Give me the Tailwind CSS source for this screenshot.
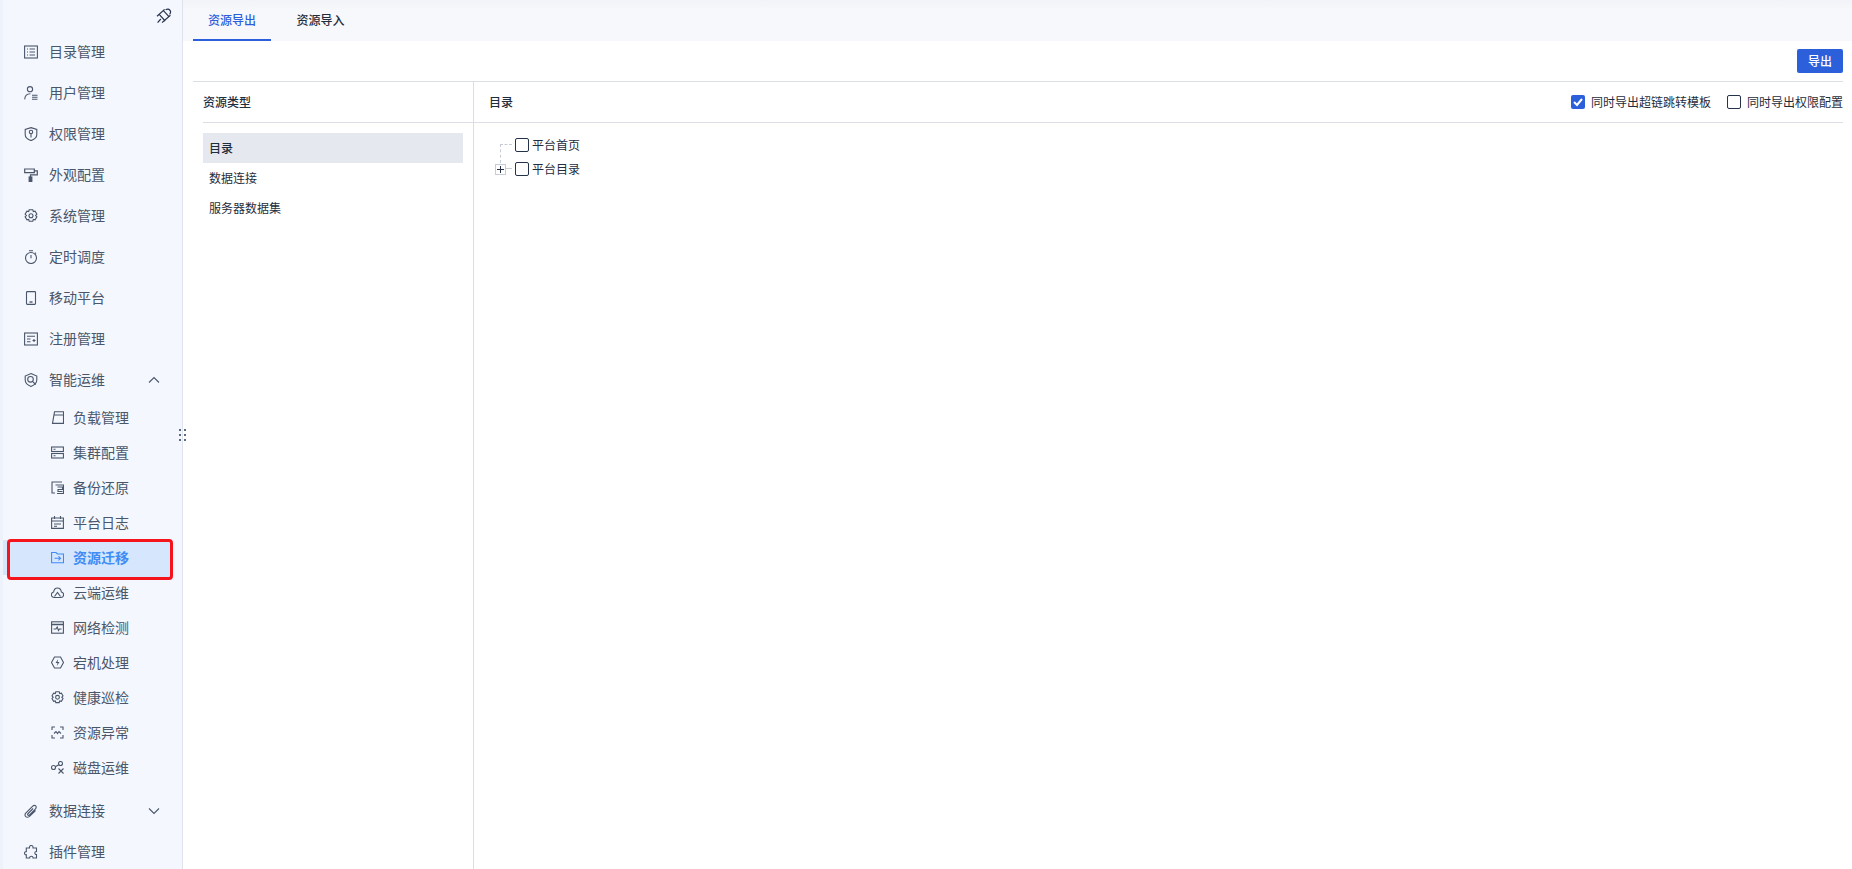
<!DOCTYPE html>
<html lang="zh">
<head>
<meta charset="utf-8">
<script src="https://cdn.jsdelivr.net/npm/@tailwindcss/browser@4"></script>
</head>
<body class="overflow-hidden bg-white font-['Noto_Sans_CJK_SC','Noto_Sans',sans-serif]">
<div class="relative flex h-[869px] w-[1852px] overflow-hidden">
  <!-- sidebar -->
  <aside class="relative h-full w-[183px] shrink-0 overflow-hidden border-r border-[#dfe3ee] border-l-[3px] border-l-[#eef2fb] bg-[#f4f7fe] text-[14px] text-[#4a566a]">
    <div class="flex h-[31px] items-start justify-end pt-[8px] pr-[10px]">
      <svg class="h-[16px] w-[16px] text-[#26324a]" viewBox="0 0 16 16" fill="none" stroke="currentColor" stroke-width="1.2"><path d="M1 8.200 8.600 1.400M6 14.600 14.400 7.200M3.200 6.400l6 6.600M7.400 2.600l5.800 6.200M9.600 1.800c1.600-.9 3.600-.6 4.400.5.800 1.100.6 2.800-.4 4M4.800 11l-3.200 3.600"/></svg>
    </div>
    <a class="flex h-[41px] items-center pl-[21px]"><svg class="mr-[11px] h-[14px] w-[14px]" viewBox="0 0 14 14" fill="none" stroke="currentColor" stroke-width="1.1"><rect x=".6" y="1" width="12.8" height="12"/><path d="M3 4h1M5.500 4H11M3 7h1M5.500 7H11M3 10h1M5.500 10H11"/></svg>目录管理</a>
    <a class="flex h-[41px] items-center pl-[21px]"><svg class="mr-[11px] h-[14px] w-[14px]" viewBox="0 0 14 14" fill="none" stroke="currentColor" stroke-width="1.1"><circle cx="6" cy="3.200" r="2.600"/><path d="M.7 13.400C.9 9.800 3 7.800 6.400 7.800M8 9.200h5.500M8 11.200h5.500M8 13.200h5.500"/></svg>用户管理</a>
    <a class="flex h-[41px] items-center pl-[21px]"><svg class="mr-[11px] h-[14px] w-[14px]" viewBox="0 0 14 14" fill="none" stroke="currentColor" stroke-width="1.1"><path d="M7 .6 12.800 2.400V7.500C12.800 10.500 10 12.600 7 13.600 4 12.600 1.200 10.500 1.200 7.500V2.400Z"/><circle cx="7" cy="5" r="1.700"/><path d="M7 6.700V10.500"/></svg>权限管理</a>
    <a class="flex h-[41px] items-center pl-[21px]"><svg class="mr-[11px] h-[14px] w-[14px]" viewBox="0 0 14 14" fill="none" stroke="currentColor" stroke-width="1.2"><path d="M.7 1h9.600v3.600H.7ZM10.300 2.800H13.300V6.800H6.500V9"/><rect x="5.200" y="9" width="2.600" height="5" fill="currentColor"/></svg>外观配置</a>
    <a class="flex h-[41px] items-center pl-[21px]"><svg class="mr-[11px] h-[14px] w-[14px]" viewBox="0 0 14 14" fill="none" stroke="currentColor" stroke-width="1.1"><path d="M5.200 .8h3.600l.5 1.800 1.800-.5 1.800 3-1.300 1.400 1.300 1.400-1.800 3-1.800-.5-.5 1.800H5.200l-.5-1.800-1.800.5-1.800-3L2.400 6.500 1.100 5.100l1.800-3 1.800.5Z"/><circle cx="7" cy="6.800" r="2"/></svg>系统管理</a>
    <a class="flex h-[41px] items-center pl-[21px]"><svg class="mr-[11px] h-[14px] w-[14px]" viewBox="0 0 14 14" fill="none" stroke="currentColor" stroke-width="1.1"><circle cx="7" cy="8" r="5.500"/><path d="M7 5v3.200M5 .8h4M11 2.600l1 1"/></svg>定时调度</a>
    <a class="flex h-[41px] items-center pl-[21px]"><svg class="mr-[11px] h-[14px] w-[14px]" viewBox="0 0 14 14" fill="none" stroke="currentColor" stroke-width="1.1"><rect x="2.500" y=".6" width="9" height="12.800" rx=".8"/><path d="M5.500 11h3" stroke-width="1.400"/></svg>移动平台</a>
    <a class="flex h-[41px] items-center pl-[21px]"><svg class="mr-[11px] h-[14px] w-[14px]" viewBox="0 0 14 14" fill="none" stroke="currentColor" stroke-width="1.1"><rect x=".6" y="1" width="12.800" height="12"/><path d="M3 4.200h8M3 7h3.500M3 9.800h3.500M8.500 8.500h3M10 7v3"/></svg>注册管理</a>
    <a class="flex h-[41px] items-center pl-[21px]"><svg class="mr-[11px] h-[14px] w-[14px]" viewBox="0 0 14 14" fill="none" stroke="currentColor" stroke-width="1.1"><path d="M7 .6 12.800 3V7c0 3-2.600 5.200-5.800 6.400C3.800 12.200 1.200 10 1.200 7V3Z"/><circle cx="6.500" cy="6.300" r="2.800"/><path d="m8.500 8.300 3.200 3.200"/></svg>智能运维<svg class="ml-[43px] h-[12px] w-[12px]" viewBox="0 0 12 12" fill="none" stroke="currentColor" stroke-width="1.1"><path d="M1 8.500 6 3.500l5 5"/></svg></a>

    <a class="flex h-[35px] items-center pl-[48px]"><svg class="mr-[9px] h-[13px] w-[13px]" viewBox="0 0 13 13" fill="none" stroke="currentColor" stroke-width="1.1"><path d="M3.500 .8h9v11.600H1.500ZM3 4h9.500"/></svg>负载管理</a>
    <a class="flex h-[35px] items-center pl-[48px]"><svg class="mr-[9px] h-[13px] w-[13px]" viewBox="0 0 13 13" fill="none" stroke="currentColor" stroke-width="1.1"><rect x=".6" y="1" width="11.800" height="4.500"/><rect x=".6" y="7.500" width="11.800" height="4.500"/><path d="M2.500 3.200h2M2.500 9.700h2"/></svg>集群配置</a>
    <a class="flex h-[35px] items-center pl-[48px]"><svg class="mr-[9px] h-[13px] w-[13px]" viewBox="0 0 13 13" fill="none" stroke="currentColor" stroke-width="1.1"><path d="M11 1H1v11h3"/><path d="M6.500 6h5v2.500h-4.500v2H11.500M4.500 4H12.500V12.500H6"/></svg>备份还原</a>
    <a class="flex h-[35px] items-center pl-[48px]"><svg class="mr-[9px] h-[13px] w-[13px]" viewBox="0 0 13 13" fill="none" stroke="currentColor" stroke-width="1.1"><path d="M.6 2h11.800v10.400H.6ZM.6 5h11.800M3.500 0v3M9.500 0v3M3 8h7M3 10.300h3"/></svg>平台日志</a>
    <a class="mr-[10px] flex h-[35px] items-center bg-[#d5e6fd] pl-[48px] font-bold text-[#3f8cf5]"><svg class="mr-[9px] h-[13px] w-[13px]" viewBox="0 0 13 13" fill="none" stroke="currentColor" stroke-width="1.1"><path d="M.6 1.500H5l1.500 1.500h6v8.800H.6ZM3.500 7.300h6M7.500 5.300l2 2-2 2"/></svg>资源迁移</a>
    <a class="flex h-[35px] items-center pl-[48px]"><svg class="mr-[9px] h-[13px] w-[13px]" viewBox="0 0 13 13" fill="none" stroke="currentColor" stroke-width="1.1"><path d="M3.200 11.500C1.500 11.500.4 10.300.4 8.700c0-1.500 1-2.500 2.200-2.700C3 3.500 4.600 2 6.500 2s3.500 1.500 3.900 4c1.200.2 2.200 1.200 2.200 2.700 0 1.600-1.100 2.800-2.800 2.800Z"/><path d="m3.500 10.500 3-4 3 4"/></svg>云端运维</a>
    <a class="flex h-[35px] items-center pl-[48px]"><svg class="mr-[9px] h-[13px] w-[13px]" viewBox="0 0 13 13" fill="none" stroke="currentColor" stroke-width="1.1"><rect x=".6" y=".8" width="11.800" height="11.400"/><path d="M.6 3.500h11.800" stroke-width="1.500"/><path d="M2.500 8h2.500l1.200-2 1.300 3.500L8.500 8h2"/></svg>网络检测</a>
    <a class="flex h-[35px] items-center pl-[48px]"><svg class="mr-[9px] h-[13px] w-[13px]" viewBox="0 0 13 13" fill="none" stroke="currentColor" stroke-width="1.1"><path d="M3.500 1h6l3 5.500-3 5.500h-6l-3-5.500Z"/><path d="M7.200 3 4.500 7h2l-.7 3 2.700-4h-2Z" fill="currentColor" stroke="none"/></svg>宕机处理</a>
    <a class="flex h-[35px] items-center pl-[48px]"><svg class="mr-[9px] h-[13px] w-[13px]" viewBox="0 0 13 13" fill="none" stroke="currentColor" stroke-width="1.1"><path d="M4.800.8h3.400l.5 1.700 1.700-.4 1.600 2.800-1.200 1.300 1.200 1.300-1.600 2.800-1.700-.4-.5 1.700H4.800l-.5-1.700-1.700.4L1 7.500l1.200-1.300L1 4.900l1.600-2.800 1.700.4Z"/><circle cx="6.500" cy="6.300" r="1.900"/></svg>健康巡检</a>
    <a class="flex h-[35px] items-center pl-[48px]"><svg class="mr-[9px] h-[13px] w-[13px]" viewBox="0 0 13 13" fill="none" stroke="currentColor" stroke-width="1.1"><path d="M4 1H1v3M9 1h3v3M4 12H1V9M9 12h3V9M3 7.500l2-2 1.500 2 1.500-2 2 2"/></svg>资源异常</a>
    <a class="flex h-[35px] items-center pl-[48px]"><svg class="mr-[9px] h-[13px] w-[13px]" viewBox="0 0 13 13" fill="none" stroke="currentColor" stroke-width="1.1"><circle cx="2.500" cy="6.500" r="2"/><circle cx="9.500" cy="2.500" r="2"/><path d="M4.300 5.700 7.800 3.700M7.500 7.500l5 5M12.500 7.500l-5 5"/></svg>磁盘运维</a>

    <a class="mt-[5px] flex h-[41px] items-center pl-[21px]"><svg class="mr-[11px] h-[14px] w-[14px]" viewBox="0 0 14 14" fill="none" stroke="currentColor" stroke-width="1.100"><path d="M11.500 6.500 5.800 12.200c-1.300 1.300-3 1.400-4 .4s-.9-2.700.4-4L8.500 2.300c1-1 2.400-1.200 3.200-.4s.6 2.200-.4 3.200L5.500 10.900c-.5.500-1.200.6-1.600.2s-.3-1.100.2-1.600l5-5"/></svg>数据连接<svg class="ml-[43px] h-[12px] w-[12px]" viewBox="0 0 12 12" fill="none" stroke="currentColor" stroke-width="1.1"><path d="M1 3.500 6 8.500l5-5"/></svg></a>
    <a class="flex h-[41px] items-center pl-[21px]"><svg class="mr-[11px] h-[14px] w-[14px]" viewBox="0 0 14 14" fill="none" stroke="currentColor" stroke-width="1.100"><path d="M5.500 3V2c0-2 3.500-2 3.500 0v1h3.500v3.500c-2.200-.6-2.200 3.600 0 3v3.500H9c.4-2.400-3.700-2.400-3.300 0H2.300V9.800c-2.400.5-2.400-3.600 0-3.200V3Z"/></svg>插件管理</a>
  </aside>

  <!-- main -->
  <main class="flex h-full min-w-0 flex-1 flex-col text-[12px] text-[#1f2d3d]">
    <div class="flex h-[41px] shrink-0 bg-linear-to-b from-[#f1f3f8] to-[#f7f8fc] to-[25%] pl-[10px] font-medium">
      <div class="flex h-full w-[78px] items-center justify-center border-b-2 border-[#2c60db] text-[#2c60db]">资源导出</div>
      <div class="flex h-full w-[99px] items-center justify-center pb-[2px]">资源导入</div>
    </div>
    <div class="mx-[10px] mr-[9px] flex h-[41px] shrink-0 items-start justify-end border-b border-[#dcdee6] pt-[8px]">
      <button class="h-[24px] w-[46px] rounded-[2px] bg-[#2c60db] font-medium text-white">导出</button>
    </div>
    <div class="ml-[10px] mr-[9px] flex min-h-0 flex-1">
      <section class="w-[281px] shrink-0 border-r border-[#dcdee6] pl-[10px] pr-[10px]">
        <div class="-mr-[10px] flex h-[41px] items-center border-b border-[#dcdee6] font-medium">资源类型</div>
        <ul class="mt-[10px]">
          <li class="flex h-[30px] items-center bg-[#e6e8ef] pl-[6px] font-medium">目录</li>
          <li class="flex h-[30px] items-center pl-[6px]">数据连接</li>
          <li class="flex h-[30px] items-center pl-[6px]">服务器数据集</li>
        </ul>
      </section>
      <section class="min-w-0 flex-1">
        <div class="flex h-[41px] items-center justify-between border-b border-[#dcdee6] pl-[15px]">
          <span class="font-medium">目录</span>
          <div class="flex items-center">
            <span class="mr-[5px] flex h-[14px] w-[14px] items-center justify-center rounded-[2px] bg-[#2c60db]"><svg class="h-[12px] w-[12px]" viewBox="0 0 12 12" fill="none" stroke="white" stroke-width="2"><path d="m2 6 3 3 5-6"/></svg></span>
            <span class="ml-[1px]">同时导出超链跳转模板</span>
            <span class="ml-[16px] mr-[6px] h-[14px] w-[14px] rounded-[2px] border border-[#26324a]"></span>
            <span>同时导出权限配置</span>
          </div>
        </div>
        <div class="relative pl-[41px] pt-[10px]">
          <div class="absolute left-[26px] top-[21px] h-[19px] w-[12px] border-l border-t border-dashed border-[#c8ccd4]"></div>
          <div class="absolute left-[32px] top-[45px] w-[6px] border-t border-dashed border-[#c8ccd4]"></div>
          <span class="absolute left-[21px] top-[41px] flex h-[11px] w-[11px] items-center justify-center border border-[#c8ccd4] bg-white"><svg class="h-[7px] w-[7px]" viewBox="0 0 7 7" stroke="#26324a" stroke-width="1"><path d="M0 3.500h7M3.500 0v7"/></svg></span>
          <div class="flex h-[24px] items-center"><span class="mr-[3px] h-[14px] w-[14px] rounded-[2px] border border-[#26324a] bg-white"></span>平台首页</div>
          <div class="flex h-[24px] items-center"><span class="mr-[3px] h-[14px] w-[14px] rounded-[2px] border border-[#26324a] bg-white"></span>平台目录</div>
        </div>
      </section>
    </div>
  </main>

  <!-- resize dots -->
  <div class="absolute left-[179px] top-[429px] grid grid-cols-2 gap-x-[3px] gap-y-[3px]">
    <i class="h-[2px] w-[2px] bg-[#5a6a80]"></i><i class="h-[2px] w-[2px] bg-[#5a6a80]"></i>
    <i class="h-[2px] w-[2px] bg-[#5a6a80]"></i><i class="h-[2px] w-[2px] bg-[#5a6a80]"></i>
    <i class="h-[2px] w-[2px] bg-[#5a6a80]"></i><i class="h-[2px] w-[2px] bg-[#5a6a80]"></i>
  </div>
  <!-- red annotation -->
  <div class="pointer-events-none absolute left-[7px] top-[539px] h-[41px] w-[166px] rounded-[4px] border-[3px] border-[#f5141c] shadow-[inset_0_-3px_0_#d5e6fd]"></div>
</div>
</body>
</html>
